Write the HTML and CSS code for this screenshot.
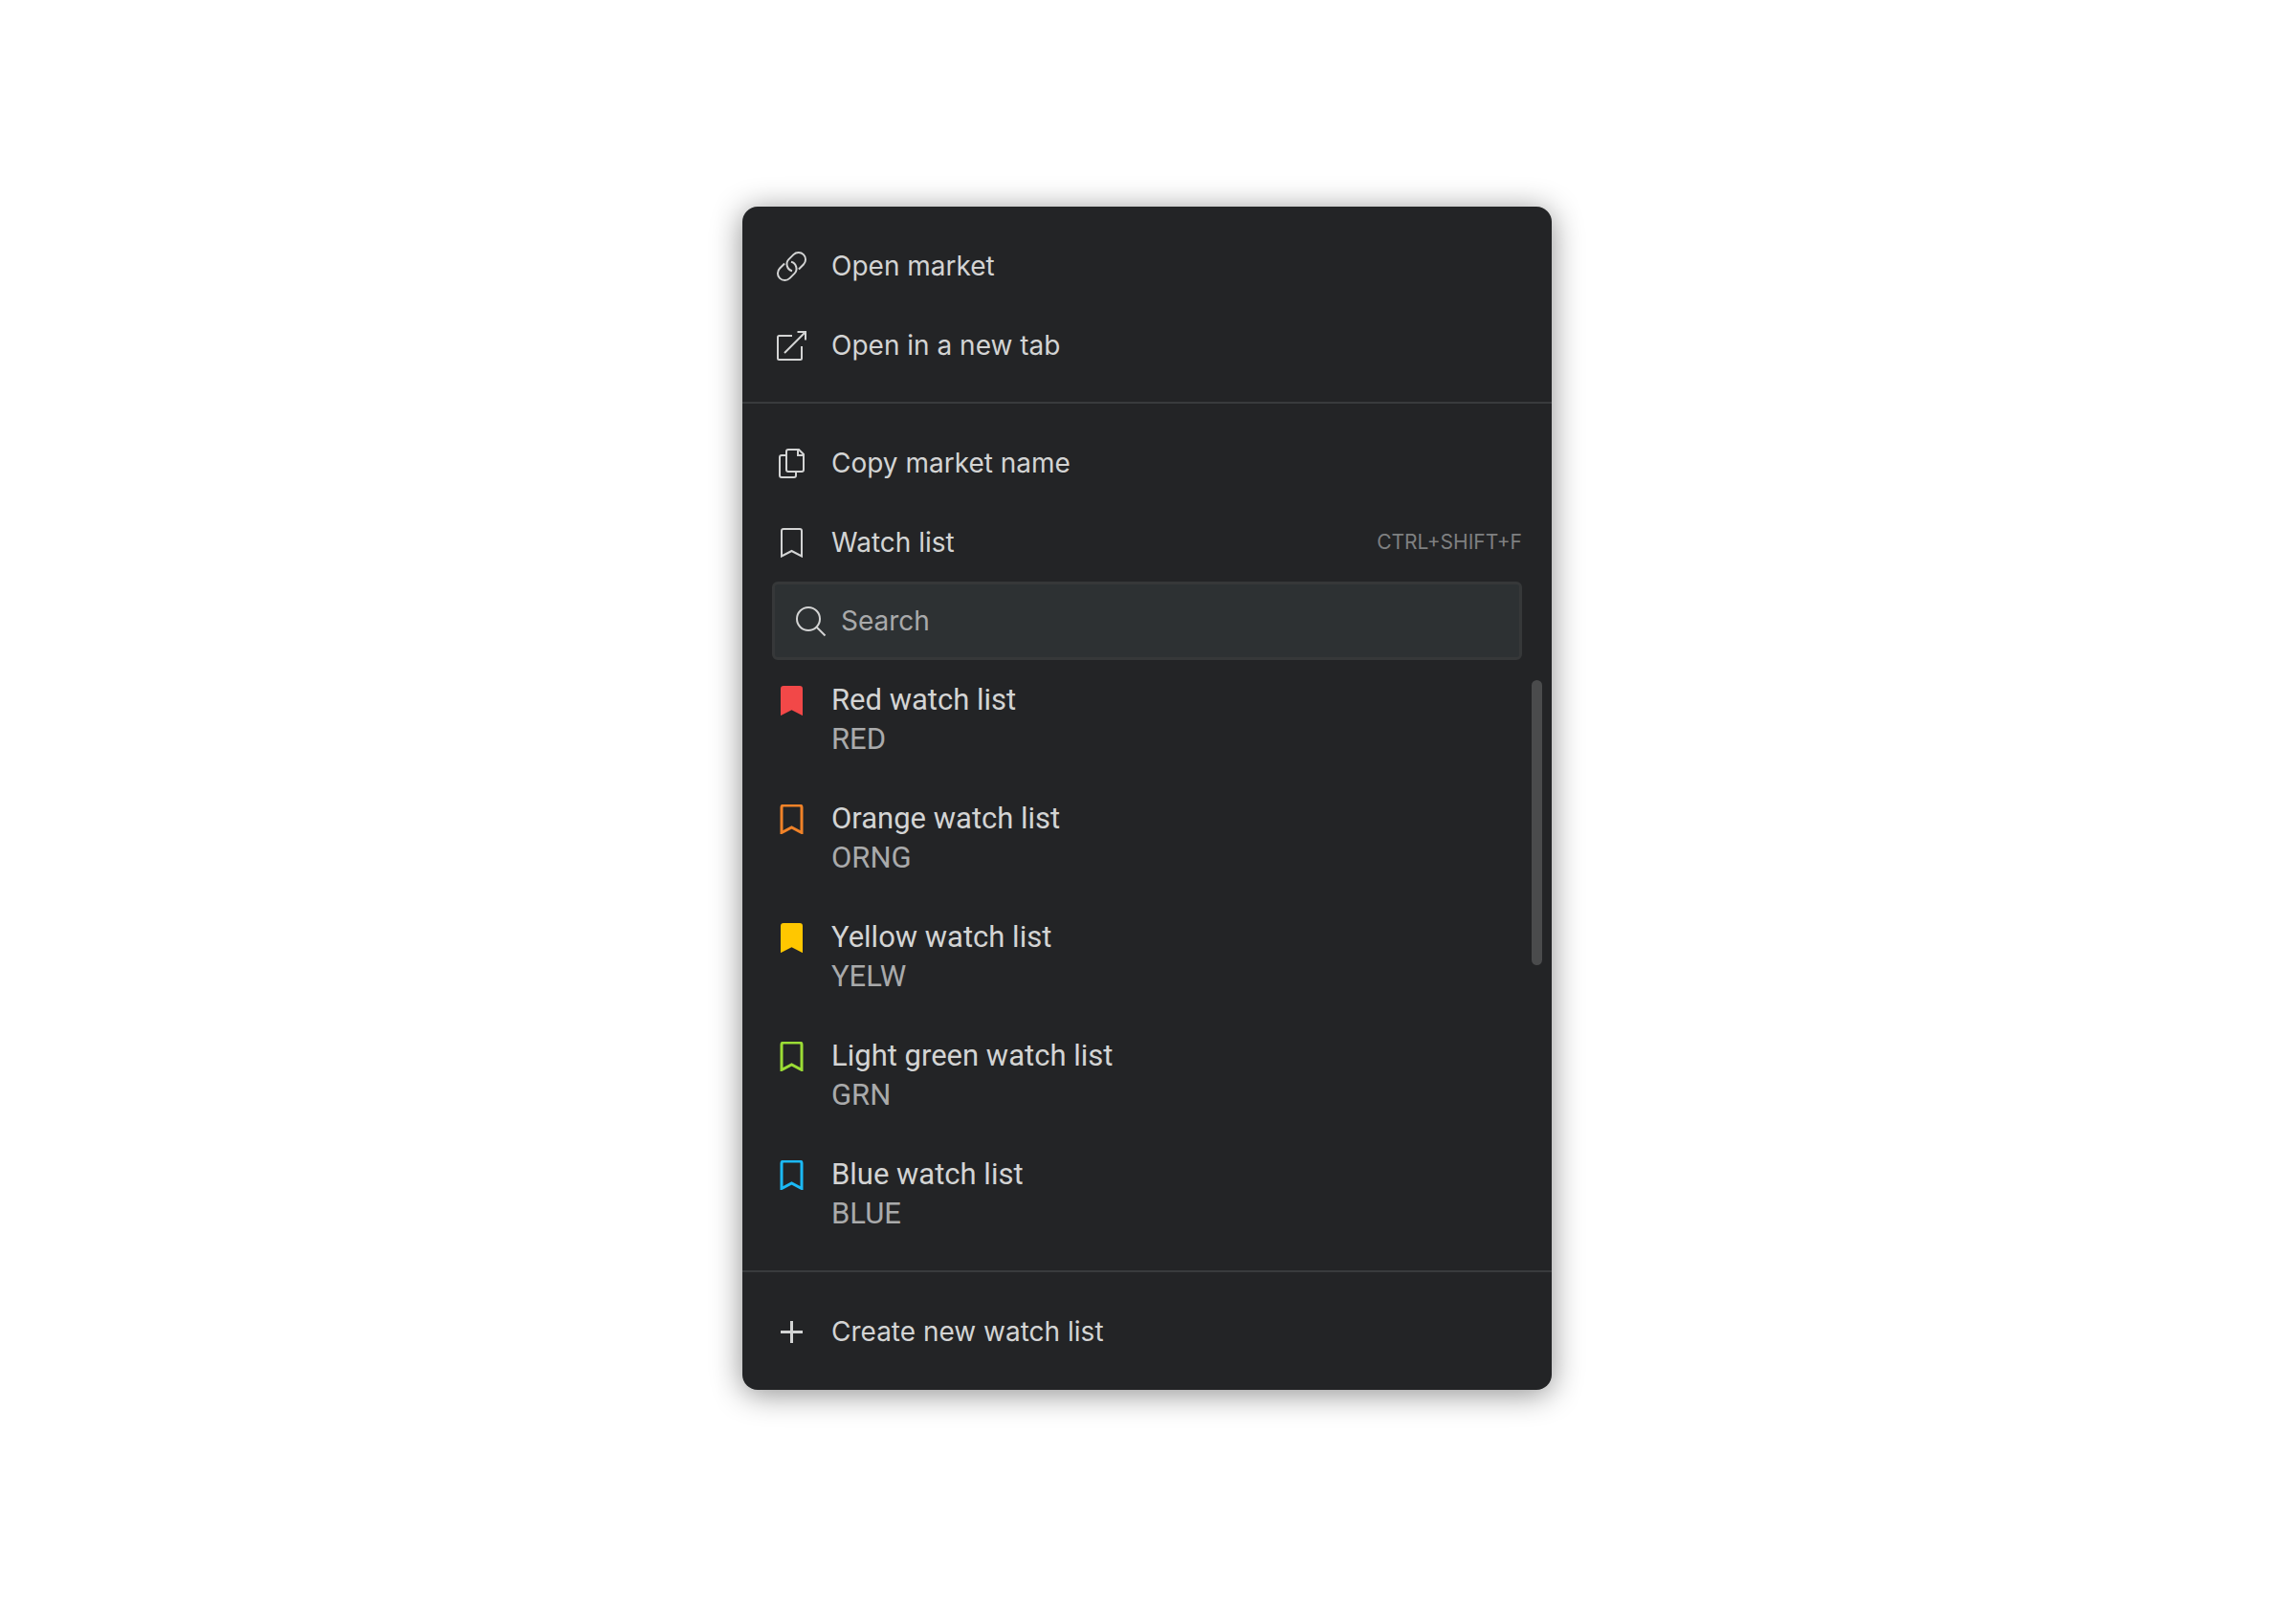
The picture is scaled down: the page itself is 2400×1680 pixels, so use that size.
FILE: index.html
```html
<!DOCTYPE html>
<html lang="en">
  <head>
    <meta charset="UTF-8" />
    <meta name="viewport" content="width=device-width, initial-scale=1.0" />
    <title>Market menu</title>
    <link rel="stylesheet" href="styles.css">
  </head>
  <body>
    <svg class="sprite" aria-hidden="true">
      <symbol id="bookmark" viewBox="0 0 31 31">
        <path d="M5 29.500V3a2 2 0 0 1 2-2h17a2 2 0 0 1 2 2v26.500l-10.500-5.500z" />
      </symbol>
    </svg>

    <main class="menu">
      <section class="group">
        <button type="button" class="row">
          <svg class="icon" viewBox="0 0 31 31">
            <path d="M22.900 18.500l5-5A7.300 7.300 0 0 0 17.500 3.100l-5 5A7.300 7.300 0 0 0 16 20.200" />
            <path d="M8.100 12.500l-5 5A7.300 7.300 0 0 0 13.500 27.900l5-5A7.300 7.300 0 0 0 15 10.800" />
          </svg>
          <span>Open market</span>
        </button>
        <button type="button" class="row">
          <svg class="icon" viewBox="0 0 31 31">
            <path d="M16 5H2.500A1.500 1.500 0 0 0 1 6.500v22A1.500 1.500 0 0 0 2.500 30h22a1.500 1.500 0 0 0 1.500-1.500V16" />
            <path d="M8 23L30 1M21.500 1H30v8.500" />
          </svg>
          <span>Open in a new tab</span>
        </button>
      </section>

      <section class="group">
        <button type="button" class="row">
          <svg class="icon" viewBox="0 0 31 31">
            <path d="M12 1h11l5 5v16a2 2 0 0 1-2 2H12a2 2 0 0 1-2-2V3a2 2 0 0 1 2-2z" />
            <path d="M22 1v6h6" />
            <path d="M10 7H5a2 2 0 0 0-2 2v19a2 2 0 0 0 2 2h13a2 2 0 0 0 2-2v-4" />
          </svg>
          <span>Copy market name</span>
        </button>
        <button type="button" class="row">
          <svg class="icon"><use href="#bookmark" /></svg>
          <span>Watch list</span>
          <kbd class="shortcut">CTRL+SHIFT+F</kbd>
        </button>

        <label class="search">
          <svg class="icon" viewBox="0 0 31 31">
            <circle cx="13" cy="13" r="12" />
            <path d="M21.500 21.500L30.500 30.500" />
          </svg>
          <input type="text" class="search__input" placeholder="Search" aria-label="Search" />
        </label>

        <div class="lists">
          <ul class="lists__items">
            <li>
              <button type="button" class="item">
                <svg class="icon icon--list icon--filled red"><use href="#bookmark" /></svg>
                <span class="item__name">Red watch list</span>
                <span class="item__code">RED</span>
              </button>
            </li>
            <li>
              <button type="button" class="item">
                <svg class="icon icon--list orange"><use href="#bookmark" /></svg>
                <span class="item__name">Orange watch list</span>
                <span class="item__code">ORNG</span>
              </button>
            </li>
            <li>
              <button type="button" class="item">
                <svg class="icon icon--list icon--filled yellow"><use href="#bookmark" /></svg>
                <span class="item__name">Yellow watch list</span>
                <span class="item__code">YELW</span>
              </button>
            </li>
            <li>
              <button type="button" class="item">
                <svg class="icon icon--list green"><use href="#bookmark" /></svg>
                <span class="item__name">Light green watch list</span>
                <span class="item__code">GRN</span>
              </button>
            </li>
            <li>
              <button type="button" class="item">
                <svg class="icon icon--list blue"><use href="#bookmark" /></svg>
                <span class="item__name">Blue watch list</span>
                <span class="item__code">BLUE</span>
              </button>
            </li>
          </ul>
          <div class="lists__thumb"></div>
        </div>
      </section>

      <section class="group">
        <button type="button" class="row">
          <svg class="icon icon--plus" viewBox="0 0 31 31">
            <path d="M15.500 4v23M4 15.500h23" />
          </svg>
          <span>Create new watch list</span>
        </button>
      </section>
    </main>
  </body>
</html>
```
FILE: styles.css
```css
* {
  box-sizing: border-box;
}
body {
  margin: 0;
  padding: 216px 32px 216px 30px;
  background-color: #fff;
  font-family: Inter, "Liberation Sans", sans-serif;
  font-size: 28px;
  color: #d3d4d4;
}
button {
  width: 100%;
  border: none;
  background: none;
  color: inherit;
  font: inherit;
  text-align: left;
  cursor: pointer;
}
.sprite {
  display: none;
}

.menu {
  max-width: 846px;
  margin: 0 auto;
  border-radius: 16px;
  background-color: #232426;
  box-shadow: 0 4px 32px rgba(0, 0, 0, 0.45);
}
.group {
  padding: 20px 0 18px;
}
.group + .group {
  border-top: 2px solid #393b3d;
}
.group:last-child {
  padding-bottom: 20px;
}
.row {
  display: flex;
  align-items: center;
  gap: 26px;
  height: 83px;
  padding: 0 31px 0 36px;
}
.row .icon {
  margin-top: 2px;
}
.row:hover {
  background-color: #2d3133;
}
.shortcut {
  margin-left: auto;
  font-family: inherit;
  font-size: 21px;
  color: #7f8081;
}

.icon {
  flex: none;
  width: 31px;
  height: 31px;
  overflow: visible;
  fill: none;
  stroke: #d3d4d4;
  stroke-width: 2;
}
.icon--plus {
  stroke-width: 3;
}
.icon--list {
  grid-row: span 2;
  margin-top: 6px;
  stroke: currentColor;
  stroke-width: 3;
}
.icon--filled {
  fill: currentColor;
  stroke-width: 2;
}

.search {
  display: flex;
  align-items: center;
  gap: 16px;
  height: 82px;
  margin: 0 31px;
  padding: 0 22px;
  border: 3px solid #363839;
  border-radius: 6px;
  background-color: #2d3133;
}
.search__input {
  flex: 1;
  min-width: 0;
  padding: 0;
  border: none;
  outline: none;
  background: none;
  font: inherit;
  color: inherit;
}
.search__input::placeholder {
  color: #a9aaab;
  opacity: 1;
}

.lists {
  position: relative;
  margin-top: 21px;
  padding-bottom: 21px;
}
.lists__items {
  display: flex;
  flex-direction: column;
  gap: 42px;
  margin: 0;
  padding: 0;
  list-style: none;
}
.lists__thumb {
  position: absolute;
  top: 0;
  right: 10px;
  width: 11px;
  height: 298px;
  border-radius: 6px;
  background-color: #4a4b4c;
}
.item {
  display: grid;
  grid-template-columns: 31px 1fr;
  column-gap: 26px;
  padding: 0 36px;
  font-family: Roboto, sans-serif;
  font-size: 31px;
  line-height: 41px;
}
.item__code {
  color: #a9aaab;
}

.red {
  color: #f24848;
}
.orange {
  color: #f08228;
}
.yellow {
  color: #ffc700;
}
.green {
  color: #9bdc35;
}
.blue {
  color: #1bb9f5;
}
```
